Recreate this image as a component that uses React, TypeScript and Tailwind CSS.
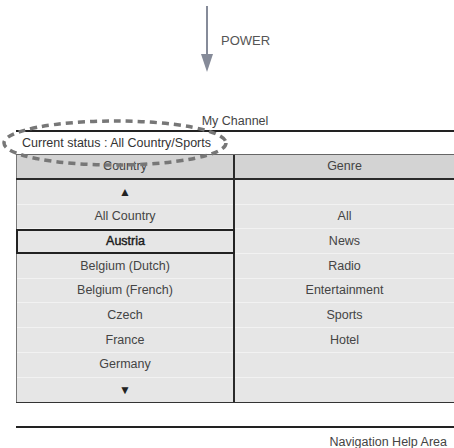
import React from 'react';

const countries = ['▲', 'All Country', 'Austria', 'Belgium (Dutch)', 'Belgium (French)', 'Czech', 'France', 'Germany', '▼'];
const genres = ['', 'All', 'News', 'Radio', 'Entertainment', 'Sports', 'Hotel', '', ''];

export default function App() {
  return (
    <div className="relative w-[454px] h-[448px] overflow-hidden bg-white font-['Liberation_Sans',Arial,sans-serif] text-[12.5px] text-[#444]">
      {/* POWER arrow */}
      <div className="flex h-[114px] items-start pl-[200px]">
        <svg width="14" height="74" viewBox="0 0 14 74" className="shrink-0">
          <line x1="7" y1="6" x2="7" y2="56" stroke="#868b99" strokeWidth="2" />
          <polygon points="1,54 13,54 7,72" fill="#868b99" />
        </svg>
        <span className="ml-[7px] mt-[34px] text-[13px] leading-none text-[#555]">POWER</span>
      </div>

      <div className="pl-[16px]">
        <div className="h-[16px] text-center leading-[14px] text-[#444]">My Channel</div>

        <div className="border-t-2 border-[#222]">
          <div className="h-[22px] pl-[6px] leading-[22px] text-[#333]">Current status : All Country/Sports</div>

          <div className="grid h-[26px] grid-cols-[219px_1fr] border-t border-b-2 border-t-[#666] border-b-[#2a2a2a] bg-[#d3d3d3]">
            <div className="flex items-center justify-center border-l border-r-2 border-l-[#777] border-r-[#2a2a2a]">Country</div>
            <div className="flex items-center justify-center">Genre</div>
          </div>

          <div className="grid grid-cols-[219px_1fr] border-b border-[#333] bg-[#e6e6e6]">
            <div className="border-l border-r-2 border-l-[#777] border-r-[#2a2a2a]">
              {countries.map((c, i) =>
                c === 'Austria' ? (
                  <div key={i} className="-mr-[2px] -ml-px flex h-[24.7px] items-center justify-center border-2 border-[#222] text-[#1a1a1a] [-webkit-text-stroke:0.4px_#1a1a1a]">
                    {c}
                  </div>
                ) : (
                  <div
                    key={i}
                    className={`flex h-[24.7px] items-center justify-center ${i < 8 ? 'border-b border-[#f2f2f2]' : ''} ${c === '▲' || c === '▼' ? 'text-[12px] text-[#222]' : ''}`}
                  >
                    {c}
                  </div>
                )
              )}
            </div>
            <div>
              {genres.map((g, i) => (
                <div key={i} className={`flex h-[24.7px] items-center justify-center ${i < 8 ? 'border-b border-[#f2f2f2]' : ''}`}>
                  {g}
                </div>
              ))}
            </div>
          </div>
        </div>

        <div className="mt-[23px] border-t-2 border-[#222]" />
        <div className="pr-[7px] pt-[5px] text-right text-[#444]">Navigation Help Area</div>
      </div>

      {/* dotted highlight around status */}
      <svg className="pointer-events-none absolute left-[1px] top-[118px]" width="228" height="50" viewBox="0 0 228 50">
        <ellipse cx="114" cy="25" rx="111" ry="22" fill="none" stroke="#777" strokeWidth="3.5" strokeDasharray="7 5" />
      </svg>
    </div>
  );
}
